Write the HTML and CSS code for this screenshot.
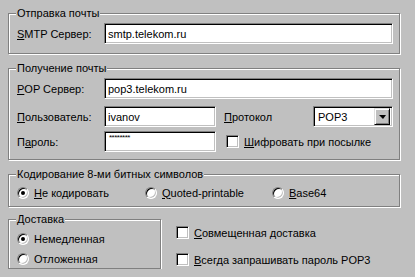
FILE: index.html
```html
<!DOCTYPE html>
<html lang="ru">
<head>
  <meta charset="UTF-8">
  <title>Настройки почты</title>
  <link rel="stylesheet" href="styles.css">
</head>
<body>
  <div class="dialog">

    <!-- Отправка -->
    <fieldset class="group send">
      <legend>Отправка почты</legend>
      <div class="row">
        <label class="label"><u>S</u>MTP Сервер:</label>
        <input class="field wide" type="text" value="smtp.telekom.ru">
      </div>
    </fieldset>

    <!-- Получение -->
    <fieldset class="group recv">
      <legend>Получение почты</legend>
      <div class="row">
        <label class="label"><u>P</u>OP Сервер:</label>
        <input class="field wide" type="text" value="pop3.telekom.ru">
      </div>
      <div class="row user">
        <label class="label"><u>П</u>ользователь:</label>
        <input class="field short" type="text" value="ivanov">
        <label class="proto"><u>П</u>ротокол</label>
        <div class="combo">
          <span class="combo-text">POP3</span>
          <span class="combo-btn"><span class="arrow"></span></span>
        </div>
      </div>
      <div class="row pass">
        <label class="label">П<u>а</u>роль:</label>
        <div class="field short secret">********</div>
        <div class="check crypt">
          <span class="box"></span>
          <span><u>Ш</u>ифровать при посылке</span>
        </div>
      </div>
    </fieldset>

    <!-- Кодирование -->
    <fieldset class="group enc">
      <legend>Кодирование 8-ми битных символов</legend>
      <div class="options">
        <div class="option"><span class="radio on"></span><span><u>Н</u>е кодировать</span></div>
        <div class="option"><span class="radio"></span><span><u>Q</u>uoted-printable</span></div>
        <div class="option"><span class="radio"></span><span><u>B</u>ase64</span></div>
      </div>
    </fieldset>

    <div class="bottom">
      <fieldset class="group deliv">
        <legend>Доставка</legend>
        <div class="option"><span class="radio on"></span><span>Немедленная</span></div>
        <div class="option"><span class="radio"></span><span>Отложенная</span></div>
      </fieldset>
      <div class="checks">
        <div class="check"><span class="box"></span><span><u>С</u>овмещенная доставка</span></div>
        <div class="check"><span class="box"></span><span><u>В</u>сегда запрашивать пароль POP3</span></div>
      </div>
    </div>

  </div>
</body>
</html>
```
FILE: styles.css
```css
body {
  margin: 0;
  background-color: #c0c0c0;
  font-family: "Liberation Sans", Arial, sans-serif;
  font-size: 11px;
  color: #000;
}
.dialog {
  padding: 7px 0 0 8px;
  display: flex;
  flex-direction: column;
}
.group {
  margin: 0;
  min-width: 0;
  width: 392px;
  box-sizing: border-box;
  padding: 3px 6px 9px 8px;
  border: 1px solid #808080;
  box-shadow: 1px 1px 0 #fff, inset 1px 1px 0 #fff;
}
.group legend {
  padding: 0 1px;
  margin-left: -1px;
  line-height: 13px;
  background-color: #c0c0c0;
}
.recv {
  margin-top: 8px;
  padding-bottom: 7px;
}
.enc {
  margin-top: 8px;
  padding-top: 5px;
  padding-bottom: 7px;
}
.row {
  display: flex;
  align-items: center;
  height: 21px;
}
.row.user {
  margin-top: 7px;
}
.row.pass {
  margin-top: 4px;
}
.label {
  width: 87px;
  flex: none;
}
.field {
  height: 21px;
  box-sizing: border-box;
  margin: 0;
  padding: 0 3px;
  font: inherit;
  color: #000;
  background-color: #fff;
  border: 1px solid;
  border-color: #808080 #fff #fff #808080;
  box-shadow: inset 1px 1px 0 #000, inset -1px -1px 0 #c0c0c0;
  outline: none;
}
.wide {
  flex: 1;
  min-width: 0;
}
.short {
  width: 112px;
  flex: none;
}
.secret {
  font-size: 8px;
  line-height: 12px;
  letter-spacing: -0.5px;
  padding-left: 4px;
}
.proto {
  width: 89px;
  margin-left: 8px;
  flex: none;
}
.combo {
  width: 80px;
  height: 21px;
  box-sizing: border-box;
  display: flex;
  align-items: center;
  padding: 2px;
  background-color: #fff;
  border: 1px solid;
  border-color: #808080 #fff #fff #808080;
  box-shadow: inset 1px 1px 0 #000, inset -1px -1px 0 #c0c0c0;
}
.combo-text {
  flex: 1;
  padding-left: 2px;
}
.combo-btn {
  width: 16px;
  height: 17px;
  box-sizing: border-box;
  display: flex;
  align-items: center;
  justify-content: center;
  background-color: #c0c0c0;
  border: 1px solid;
  border-color: #dfdfdf #000 #000 #dfdfdf;
  box-shadow: inset 1px 1px 0 #fff, inset -1px -1px 0 #808080;
}
.arrow {
  width: 0;
  height: 0;
  border-left: 4px solid transparent;
  border-right: 3px solid transparent;
  border-top: 4px solid #000;
}
.check {
  display: flex;
  align-items: center;
  gap: 5px;
}
.crypt {
  margin-left: 10px;
}
.box {
  width: 13px;
  height: 13px;
  box-sizing: border-box;
  flex: none;
  background-color: #fff;
  border: 1px solid;
  border-color: #808080 #fff #fff #808080;
  box-shadow: inset 1px 1px 0 #000, inset -1px -1px 0 #c0c0c0;
}
.options {
  display: grid;
  grid-template-columns: 128px 127px auto;
}
.option {
  display: flex;
  align-items: center;
  gap: 5px;
  height: 13px;
}
.radio {
  position: relative;
  width: 12px;
  height: 12px;
  box-sizing: border-box;
  flex: none;
  border-radius: 50%;
  background-color: #fff;
  border: 1px solid;
  border-color: #808080 #fff #fff #808080;
  box-shadow: inset 1px 1px 0 #000, inset -1px -1px 0 #c0c0c0;
}
.radio.on::after {
  content: "";
  position: absolute;
  left: 3px;
  top: 3px;
  width: 4px;
  height: 4px;
  border-radius: 50%;
  background-color: #000;
}
.bottom {
  display: flex;
  align-items: flex-start;
  margin-top: 6px;
}
.deliv {
  width: 153px;
  padding: 6px 6px 3px 8px;
  display: flex;
  flex-direction: column;
  gap: 7px;
}
.checks {
  display: flex;
  flex-direction: column;
  gap: 14px;
  margin-left: 15px;
  margin-top: 13px;
}
```
